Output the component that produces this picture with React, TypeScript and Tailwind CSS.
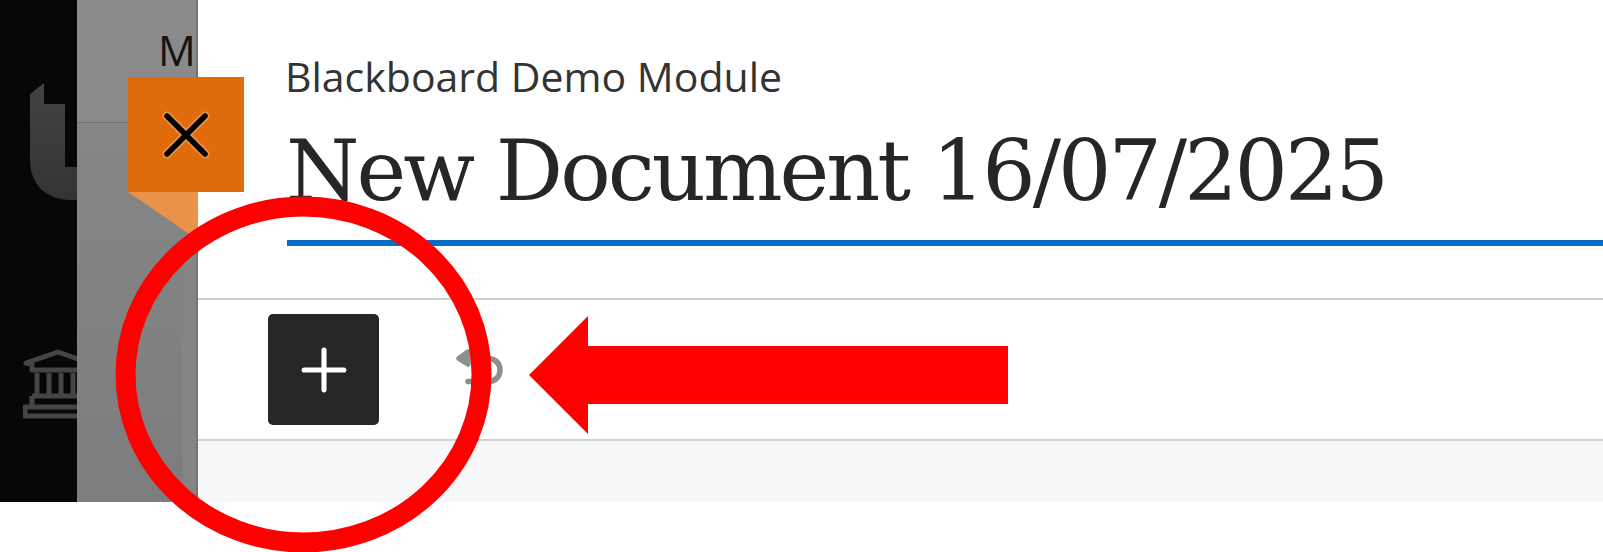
import { Plus } from "lucide-react";

// Icono de banco, recortado pela borda da barra lateral
function BankIcon() {
  return (
    <svg viewBox="0 0 70 70" className="w-[70px] h-[70px] shrink-0" fill="none" stroke="#454545" strokeWidth="5">
      <path d="M3 14 L35 3 L67 14 V21 H9 V15 Z" strokeLinejoin="round" />
      <path d="M14 24 V46 M26 24 V46 M38 24 V46 M50 24 V46 M62 24 V46" />
      <path d="M9 47 H66 M9 47 V56" />
      <path d="M2 58 H68 V67 H2 Z" strokeLinejoin="round" />
    </svg>
  );
}

function Logo() {
  return (
    <svg viewBox="0 0 47 117" className="w-[47px] h-[117px] shrink-0">
      <defs>
        <linearGradient id="logoFill" x1="0" y1="0" x2="0" y2="1">
          <stop offset="0" stopColor="#434343" />
          <stop offset="1" stopColor="#333333" />
        </linearGradient>
      </defs>
      <path d="M0 11 L14 0 V21 H35 V84 H47 V117 H42 C14 117 0 100 0 76 Z" fill="url(#logoFill)" />
    </svg>
  );
}

function UndoIcon() {
  return (
    <svg viewBox="0 0 47 36" className="w-[47px] h-[36px]" fill="none" stroke="#8f8f8f" strokeWidth="5.5">
      <path d="M12 3 L3 9.5 L12 15 Z" fill="#8f8f8f" strokeLinejoin="round" />
      <path d="M8 9.5 H32 C39 9.5 44 14 44 21 C44 28 39 32.5 32 32.5 H12" strokeLinecap="round" />
    </svg>
  );
}

function CloseIcon() {
  return (
    <svg viewBox="0 0 50 50" className="w-[50px] h-[50px]" fill="none" strokeLinecap="round">
      <path d="M6 6 L44 44 M44 6 L6 44" stroke="#e8924a" strokeWidth="9" />
      <path d="M6 6 L44 44 M44 6 L6 44" stroke="#000000" strokeWidth="5.5" />
    </svg>
  );
}

export default function App() {
  return (
    <div className="relative w-[1603px] h-[552px] bg-white overflow-hidden">
      <div className="flex h-[502px]">
        {/* Barra lateral escura */}
        <div className="w-[77px] shrink-0 bg-[#070707] overflow-hidden pt-[83px] pl-[30px]">
          <Logo />
          <div className="mt-[149px] -ml-[7px]">
            <BankIcon />
          </div>
        </div>

        {/* Painel cinza por baixo */}
        <div className="w-[121px] shrink-0 flex bg-[#858585]">
          <div className="flex-1 flex flex-col">
            <div className="h-[123px] border-b border-[#6f6f6f] bg-[#8a8a8a] pl-[81px] pt-[21px]">
              <span className="font-['Open_Sans',sans-serif] text-[42px] leading-[57px] text-[#141414]">M</span>
            </div>
            <div className="flex-1 flex justify-end bg-gradient-to-b from-[#868686] to-[#7d7d7d]">
              <div className="w-[13px] bg-[#858585]" />
            </div>
          </div>
          <div className="w-[13px] bg-[#747474]" />
        </div>

        {/* Conteudo */}
        <div className="flex-1 flex flex-col min-w-0 bg-white">
          <div className="h-[300px] border-b-2 border-[#d2d2d2] pl-[89px] pt-[48px]">
            <p className="-ml-[2px] font-['Open_Sans',sans-serif] text-[41px] leading-[56px] text-[#333333]">Blackboard Demo Module</p>
            <h1 className="mt-[18px] -ml-[1px] font-['DejaVu_Serif',serif] text-[84px] leading-[98px] text-[#262626] tracking-[-3px] whitespace-nowrap">
              New Document 16/07/2025
            </h1>
            <div className="mt-[20px] h-[6px] bg-[#0b6cc4]" />
          </div>
          <div className="h-[141px] border-b-2 border-[#d2d2d2] flex items-center pl-[70px]">
            <div className="w-[111px] h-[111px] rounded-[5px] bg-[#262626] flex items-center justify-center">
              <Plus size={68} strokeWidth={1.8} color="#ffffff" />
            </div>
            <div className="ml-[77px] mb-[6px]">
              <UndoIcon />
            </div>
          </div>
          <div className="flex-1 bg-[#f8f8f8]" />
        </div>
      </div>

      {/* Botao laranja de fechar, sobre os paineis */}
      <div className="absolute left-[128px] top-[77px] w-[116px] h-[115px] bg-[#e06b0a] flex items-center justify-center">
        <CloseIcon />
      </div>
      <svg className="absolute left-[128px] top-[192px] w-[70px] h-[48px]" viewBox="0 0 70 48">
        <path d="M0 0 H70 V48 Z" fill="#e8924a" />
      </svg>

      {/* Anotacoes vermelhas */}
      <svg className="absolute left-0 top-0 w-[1603px] h-[552px] pointer-events-none" viewBox="0 0 1603 552">
        <ellipse cx="303.5" cy="374.5" rx="178" ry="168" fill="none" stroke="#ff0000" strokeWidth="20" />
        <path d="M529 375 L588 316 V346 H1008 V404 H588 V434 Z" fill="#ff0000" />
      </svg>
    </div>
  );
}
